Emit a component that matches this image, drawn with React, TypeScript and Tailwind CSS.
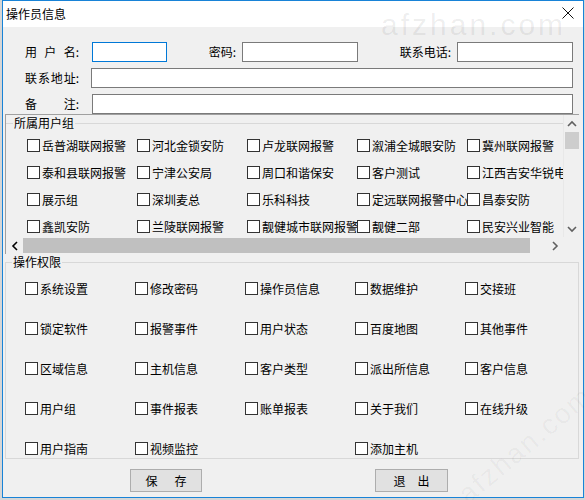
import React from "react";

const g1: string[][] = [
  ["岳普湖联网报警", "河北金锁安防", "卢龙联网报警", "溆浦全城眼安防", "冀州联网报警"],
  ["泰和县联网报警", "宁津公安局", "周口和谐保安", "客户测试", "江西吉安华锐电子"],
  ["展示组", "深圳麦总", "乐科科技", "定远联网报警中心", "昌泰安防"],
  ["鑫凯安防", "兰陵联网报警", "靓健城市联网报警", "靓健二部", "民安兴业智能"],
];

const g2: string[][] = [
  ["系统设置", "修改密码", "操作员信息", "数据维护", "交接班"],
  ["锁定软件", "报警事件", "用户状态", "百度地图", "其他事件"],
  ["区域信息", "主机信息", "客户类型", "派出所信息", "客户信息"],
  ["用户组", "事件报表", "账单报表", "关于我们", "在线升级"],
  ["用户指南", "视频监控", "", "添加主机", ""],
];

function Cb({ label }: { label: string }) {
  if (!label) return <div className="w-[110px] shrink-0 h-[15px]" />;
  return (
    <div className="w-[110px] shrink-0 h-[15px] flex items-center">
      <span className="w-[13px] h-[13px] shrink-0 border border-[#333333] bg-white" />
      <span className="ml-[2px] whitespace-nowrap text-[12px] leading-[15px] text-black">{label}</span>
    </div>
  );
}

function Label({ parts }: { parts: string[] }) {
  return (
    <div className="w-[54px] shrink-0 flex justify-between text-[12px] leading-[16px] text-black">
      {parts.map((p, i) => (
        <span key={i}>{p}</span>
      ))}
    </div>
  );
}

function Chevron({ dir, color }: { dir: "up" | "down" | "left" | "right"; color: string }) {
  const d = {
    up: "M1 6 L5 2 L9 6",
    down: "M1 2 L5 6 L9 2",
    left: "M6 1 L2 5 L6 9",
    right: "M2 1 L6 5 L2 9",
  }[dir];
  const vertical = dir === "up" || dir === "down";
  return (
    <svg width={vertical ? 10 : 8} height={vertical ? 8 : 10} viewBox={vertical ? "0 0 10 8" : "0 0 8 10"}>
      <path d={d} fill="none" stroke={color} strokeWidth={1.6} />
    </svg>
  );
}

export default function App() {
  return (
    <div className="w-[585px] h-[500px] bg-[#d6d6d6] font-['Noto_Sans_CJK_SC','Liberation_Sans',sans-serif] text-black overflow-hidden">
      <div className="relative ml-[2px] w-[582px] h-[498px] border border-[#1883d7] bg-[#f0f0f0] flex flex-col">
        {/* title bar */}
        <div className="h-[26px] bg-white flex items-center justify-between shrink-0">
          <span className="pl-[3px] text-[12px] leading-[16px]">操作员信息</span>
          <svg width="12" height="12" viewBox="0 0 12 12" className="mr-[9px] -mt-[2px]">
            <path d="M0.5 0.5 L11.5 11.5 M11.5 0.5 L0.5 11.5" stroke="#111" strokeWidth="1" />
          </svg>
        </div>

        {/* form rows */}
        <div className="pt-[15px] pl-[22px] flex flex-col gap-[6px]">
          <div className="flex items-center h-[20px]">
            <Label parts={["用", "户", "名:"]} />
            <div className="ml-[13px] w-[75px] h-[20px] border border-[#0078d7] bg-white" />
            <div className="w-[75px] text-right pr-[6px] text-[12px] leading-[16px]">密码:</div>
            <div className="w-[116px] h-[20px] border border-[#7a7a7a] bg-white" />
            <div className="w-[99px] text-right pr-[6px] text-[12px] leading-[16px]">联系电话:</div>
            <div className="w-[116px] h-[20px] border border-[#7a7a7a] bg-white" />
          </div>
          <div className="flex items-center h-[20px]">
            <Label parts={["联", "系", "地", "址:"]} />
            <div className="ml-[12px] w-[482px] h-[20px] border border-[#7a7a7a] bg-white" />
          </div>
          <div className="flex items-center h-[20px]">
            <Label parts={["备", "注:"]} />
            <div className="ml-[13px] w-[481px] h-[20px] border border-[#7a7a7a] bg-white" />
          </div>
        </div>

        {/* scroll panel group 1 */}
        <div className="ml-[2px] w-[574px] h-[140px] border-l border-t border-[#a0a0a0] flex flex-col shrink-0">
          <div className="flex h-[122px]">
            <div className="flex-1 overflow-hidden">
              <fieldset className="border-t border-[#d8d8d8] min-w-0">
                <legend className="ml-[7px] px-[1px] text-[12px] leading-[16px]">所属用户组</legend>
                <div className="pt-[7px] pl-[21px] flex flex-col gap-[12px]">
                  {g1.map((row, i) => (
                    <div key={i} className="flex">
                      {row.map((l, j) => (
                        <Cb key={j} label={l} />
                      ))}
                    </div>
                  ))}
                </div>
              </fieldset>
            </div>
            <div className="w-[16px] shrink-0 bg-[#f0f0f0] border-l border-[#e8e8e8] flex flex-col items-center">
              <div className="h-[17px] flex items-center justify-center">
                <Chevron dir="up" color="#606060" />
              </div>
              <div className="h-[17px] w-[14px] bg-[#cdcdcd]" />
              <div className="flex-1" />
              <div className="h-[17px] flex items-center justify-center">
                <Chevron dir="down" color="#606060" />
              </div>
            </div>
          </div>
          <div className="h-[17px] flex shrink-0">
            <div className="w-[17px] bg-[#f0f0f0] flex items-center justify-center">
              <Chevron dir="left" color="#000000" />
            </div>
            <div className="w-[507px] bg-[#c0c0c0] my-[1px]" />
            <div className="w-[16px] bg-[#f0f0f0]" />
            <div className="w-[17px] bg-[#f0f0f0] flex items-center justify-center">
              <Chevron dir="right" color="#606060" />
            </div>
            <div className="flex-1 bg-[#f0f0f0]" />
          </div>
        </div>

        {/* group 2 */}
        <fieldset className="ml-[2px] w-[574px] border border-[#d8d8d8] min-w-0 shrink-0">
          <legend className="ml-[6px] px-[1px] text-[12px] leading-[16px]">操作权限</legend>
          <div className="pt-[11px] pb-[2px] pl-[19px] flex flex-col gap-[25px]">
            {g2.map((row, i) => (
              <div key={i} className="flex">
                {row.map((l, j) => (
                  <Cb key={j} label={l} />
                ))}
              </div>
            ))}
          </div>
        </fieldset>

        {/* buttons */}
        <div className="mt-[10px] flex">
          <div className="ml-[127px] w-[72px] h-[23px] border border-[#adadad] bg-[#e1e1e1] flex items-center justify-center gap-[17px] text-[12px] leading-[16px]">
            <span>保</span>
            <span>存</span>
          </div>
          <div className="ml-[173px] w-[73px] h-[23px] border border-[#adadad] bg-[#e1e1e1] flex items-center justify-center gap-[12px] text-[12px] leading-[16px]">
            <span>退</span>
            <span>出</span>
          </div>
        </div>

        {/* watermarks */}
        <div className="pointer-events-none absolute left-[378px] top-[9px] text-[30px] leading-none tracking-[3px] font-['Liberation_Sans',sans-serif] text-black/[0.07]">
          afzhan.com
        </div>
        <div className="pointer-events-none absolute left-[440px] top-[430px] rotate-[-40deg] text-[28px] leading-none tracking-[2px] font-['Liberation_Sans',sans-serif] text-black/[0.04]">
          afzhan.com
        </div>
      </div>
    </div>
  );
}
